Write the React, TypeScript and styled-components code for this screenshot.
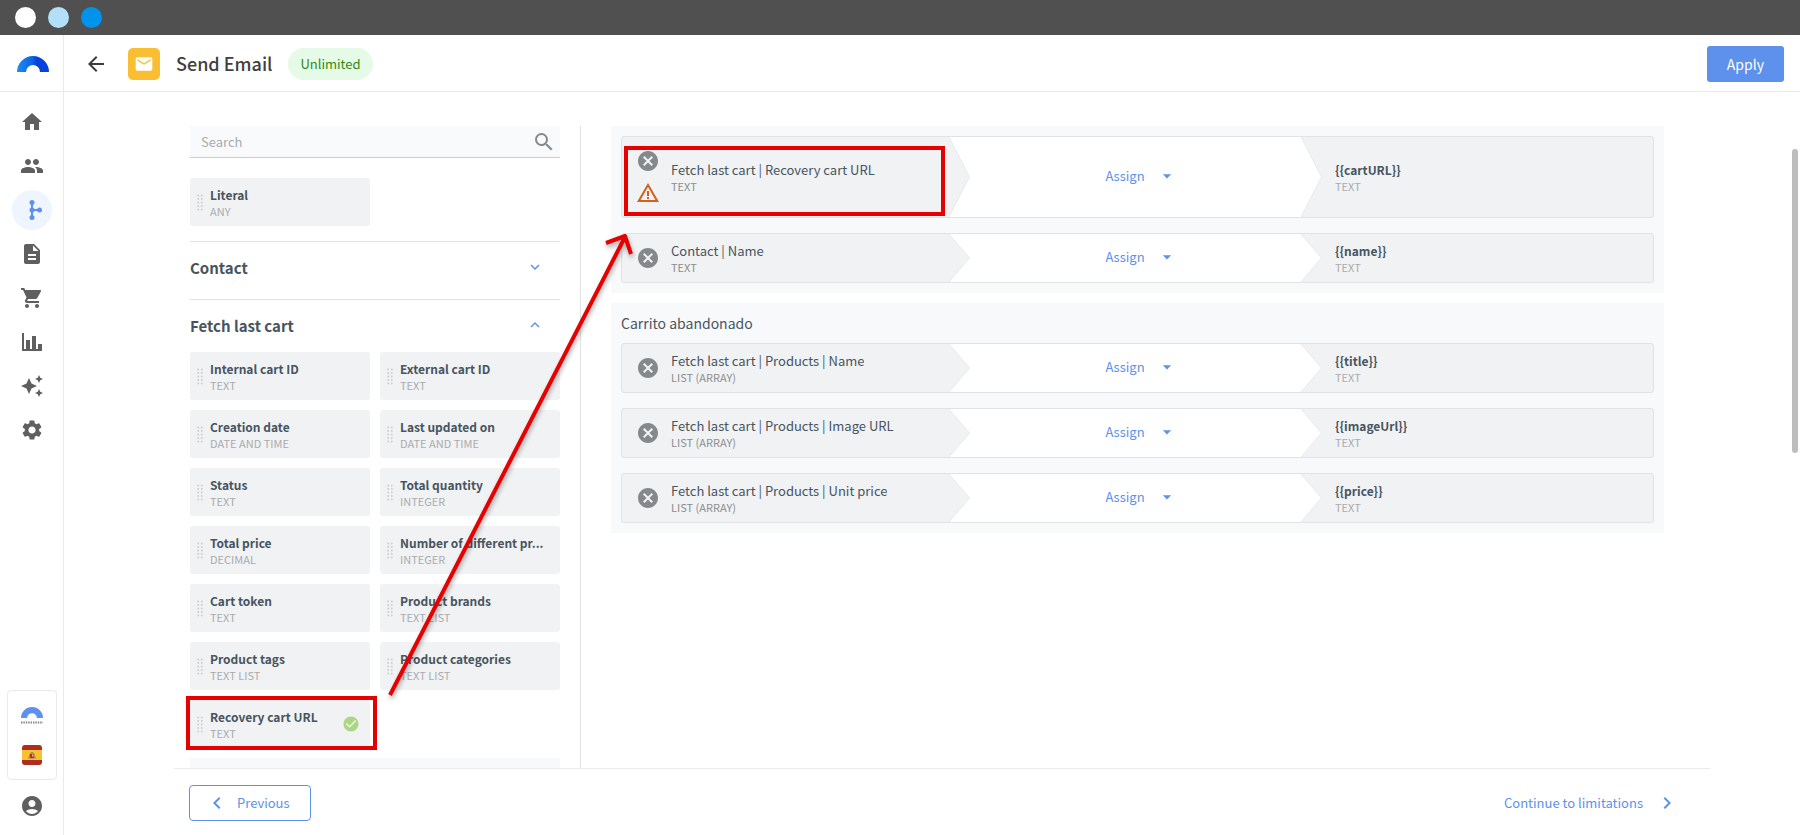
import React from "react";
import styled, { createGlobalStyle } from "styled-components";
import {
  MdHome,
  MdPeople,
  MdDescription,
  MdShoppingCart,
  MdAutoAwesome,
  MdSettings,
  MdAccountCircle,
  MdSearch,
  MdExpandMore,
  MdExpandLess,
  MdCancel,
  MdWarningAmber,
  MdCheckCircle,
  MdEmail,
  MdArrowBack,
  MdChevronLeft,
  MdChevronRight,
  MdArrowDropDown,
} from "react-icons/md";

const color = {
  blue: "#5d91ec",
  slate: "#475560",
  muted: "#a9abad",
  tile: "#f1f2f4",
  panel: "#f8f9fb",
  line: "#e0e2e4",
  red: "#e60000",
  icon: "#5f5f5f",
};

const GlobalStyle = createGlobalStyle`
  *, *::before, *::after { box-sizing: border-box; }
  body { margin: 0; background: #fff; color: ${color.slate}; }
  body, button, input { font-family: "Noto Sans CJK SC", "Noto Sans", sans-serif; }
  button { padding: 0; border: 0; background: none; color: inherit; cursor: pointer; }
  h1, h2, p { margin: 0; }
  svg { display: block; flex: none; }
`;

const Page = styled.div`
  display: flex;
  flex-direction: column;
  height: 100vh;
  overflow: hidden;
`;

const WindowBar = styled.div`
  display: flex;
  flex: none;
  align-items: center;
  gap: 12px;
  height: 35px;
  padding: 0 15px;
  background: #505050;
`;

const WindowDot = styled.span<{ $fill: string }>`
  width: 21px;
  height: 21px;
  border-radius: 50%;
  background: ${(p) => p.$fill};
`;

const Body = styled.div`
  display: flex;
  flex: 1;
  min-height: 0;
`;

const Sidebar = styled.nav`
  display: flex;
  flex: none;
  flex-direction: column;
  align-items: center;
  width: 64px;
  padding-bottom: 9px;
  border-right: 1px solid #e9eaeb;
`;

const LogoLink = styled.a`
  display: flex;
  align-items: center;
  justify-content: center;
  width: 100%;
  height: 57px;
  padding: 2px 0 0 2px;
  border-bottom: 1px solid #e9eaeb;
`;

const NavList = styled.div`
  display: flex;
  flex: 1;
  flex-direction: column;
  gap: 4px;
  padding-top: 10px;
`;

const NavLink = styled.a<{ $active?: boolean }>`
  display: flex;
  align-items: center;
  justify-content: center;
  width: 40px;
  height: 40px;
  border-radius: 50%;
  color: ${(p) => (p.$active ? color.blue : color.icon)};
  background: ${(p) => (p.$active ? "#eff5fe" : "transparent")};
`;

const AccountBox = styled.div`
  display: flex;
  flex-direction: column;
  align-items: center;
  gap: 20px;
  width: 50px;
  height: 90px;
  margin-bottom: 6px;
  padding-top: 16px;
  border: 1px solid #e9eaeb;
  border-radius: 4px;
`;

const Main = styled.main`
  display: flex;
  flex: 1;
  flex-direction: column;
  min-width: 0;
`;

const Header = styled.header`
  display: flex;
  flex: none;
  align-items: center;
  gap: 16px;
  height: 57px;
  padding: 2px 16px 0 20px;
  border-bottom: 1px solid #e9eaeb;
`;

const BackButton = styled.button`
  margin-right: 4px;
  color: #3c3c3c;
`;

const MailTile = styled.span`
  display: flex;
  align-items: center;
  justify-content: center;
  width: 32px;
  height: 32px;
  border-radius: 5px;
  color: #fff;
  background: #fabe32;
`;

const Title = styled.h1`
  font-size: 18px;
  font-weight: 500;
  line-height: 32px;
  padding-bottom: 2px;
  color: #404040;
`;

const Badge = styled.span`
  padding: 0 12px;
  border-radius: 16px;
  font-size: 13px;
  line-height: 32px;
  color: #2f8a10;
  background: #e5fbe8;
`;

const ApplyButton = styled.button`
  height: 36px;
  margin-left: auto;
  padding: 0 20px;
  border-radius: 3px;
  font-size: 14px;
  color: #fff;
  background: ${color.blue};
`;

const Workspace = styled.div`
  position: relative;
  display: flex;
  flex: 1;
  min-height: 0;
  margin-left: 110px;
  padding: 34px 136px 0 0;
`;

const Fields = styled.section`
  flex: none;
  width: 407px;
  padding: 0 20px 0 16px;
  overflow: hidden;
  border-right: 1px solid ${color.line};
`;

const SearchBox = styled.label`
  display: flex;
  align-items: center;
  height: 32px;
  margin-bottom: 20px;
  padding: 0 4px 0 11px;
  border-bottom: 1px solid #c9ced3;
  color: #85888a;
  background: #f9fafc;
`;

const SearchInput = styled.input`
  flex: 1;
  min-width: 0;
  padding: 0;
  border: 0;
  outline: 0;
  font-size: 13px;
  background: transparent;
  &::placeholder { color: ${color.muted}; opacity: 1; }
`;

const TileGrid = styled.div`
  display: grid;
  grid-template-columns: 1fr 1fr;
  gap: 10px;
`;

const Tile = styled.div`
  position: relative;
  display: flex;
  align-items: center;
  gap: 7px;
  min-width: 0;
  height: 48px;
  padding: 0 10px 0 7px;
  border-radius: 3px;
  background: ${color.tile};
`;

const TileText = styled.div`
  flex: 1;
  min-width: 0;
  padding-top: 1px;
`;

const Name = styled.p<{ $strong?: boolean }>`
  overflow: hidden;
  font-size: ${(p) => (p.$strong ? 12 : 13)}px;
  font-weight: ${(p) => (p.$strong ? 700 : 400)};
  line-height: 17px;
  text-overflow: ellipsis;
  white-space: nowrap;
`;

const Kind = styled.p<{ $dark?: boolean }>`
  font-size: 11px;
  line-height: 16px;
  color: ${(p) => (p.$dark ? "#8a8d90" : color.muted)};
`;

const SectionToggle = styled.button<{ $first?: boolean }>`
  display: flex;
  align-items: center;
  justify-content: space-between;
  width: 100%;
  height: ${(p) => (p.$first ? 58 : 53)}px;
  margin-top: ${(p) => (p.$first ? 15 : 0)}px;
  padding-right: 16px;
  padding-bottom: ${(p) => (p.$first ? 7 : 2)}px;
  border-top: 1px solid ${color.line};
  font-size: 15px;
  font-weight: 700;
  svg { color: ${color.blue}; }
`;

const NextGroup = styled.div`
  height: 48px;
  margin-top: 10px;
  background: ${color.panel};
`;

const Mappings = styled.section`
  display: flex;
  flex: 1;
  flex-direction: column;
  gap: 10px;
  min-width: 0;
  padding-left: 30px;
`;

const Panel = styled.div`
  display: flex;
  flex-direction: column;
  gap: 15px;
  padding: 10px;
  background: ${color.panel};
`;

const PanelTitle = styled.h2`
  margin-bottom: -15px;
  font-size: 14px;
  font-weight: 400;
  line-height: 20px;
  padding-bottom: 10px;
`;

const Row = styled.div<{ $tall?: boolean }>`
  position: relative;
  display: grid;
  grid-template-columns: 327fr 352fr 352fr;
  height: ${(p) => (p.$tall ? 82 : 50)}px;
  border: 1px solid ${color.line};
  border-radius: 3px;
  background: ${color.tile};
`;

const Source = styled.div`
  display: flex;
  align-items: center;
  gap: 11px;
  min-width: 0;
  padding-left: 14px;
`;

const SourceIcons = styled.div`
  display: flex;
  flex-direction: column;
  gap: 8px;
`;

const RemoveButton = styled.button`
  color: #85898b;
`;

const Action = styled.div`
  position: relative;
  display: flex;
  align-items: center;
  justify-content: center;
  padding-left: 32px;
  background: #fff;
`;

const Notch = styled.svg<{ $end?: boolean }>`
  position: absolute;
  top: 0;
  left: ${(p) => (p.$end ? "100%" : "0")};
  width: 21px;
  height: 100%;
`;

const AssignButton = styled.button`
  display: flex;
  align-items: center;
  gap: 12px;
  padding-bottom: 2px;
  font-size: 13px;
  line-height: 20px;
  color: ${color.blue};
`;

const Target = styled.div`
  display: flex;
  flex-direction: column;
  justify-content: center;
  padding-left: 34px;
`;

const Footer = styled.footer`
  display: flex;
  flex: none;
  align-items: center;
  justify-content: space-between;
  height: 67px;
  margin: 0 90px 0 110px;
  padding: 1px 31px 0 15px;
  border-top: 1px solid #e9eaeb;
  color: ${color.blue};
`;

const FooterButton = styled.button<{ $outlined?: boolean }>`
  display: flex;
  align-items: center;
  gap: ${(p) => (p.$outlined ? 8 : 12)}px;
  height: 36px;
  padding: ${(p) => (p.$outlined ? "0 20px 0 15px" : "0")};
  border: ${(p) => (p.$outlined ? `1px solid ${color.blue}` : "0")};
  border-radius: 4px;
  font-size: 13px;
`;

const ScrollThumb = styled.div`
  position: absolute;
  top: 57px;
  right: 2px;
  width: 6px;
  height: 304px;
  border-radius: 3px;
  background: #bdbdbd;
`;

const Highlight = styled.span<{ $row?: boolean }>`
  position: absolute;
  z-index: 1;
  top: ${(p) => (p.$row ? "9px" : "-4px")};
  left: ${(p) => (p.$row ? "2px" : "-4px")};
  width: ${(p) => (p.$row ? "321px" : "191px")};
  height: ${(p) => (p.$row ? "70px" : "54px")};
  border: 4px solid ${color.red};
  pointer-events: none;
`;

const ArrowLayer = styled.svg`
  position: absolute;
  top: 134px;
  left: 206px;
  filter: drop-shadow(1px 3px 2px rgba(0, 0, 0, 0.3));
  pointer-events: none;
`;

function BrandArc({ width, plain }: { width: number; plain?: boolean }) {
  return (
    <svg width={width} height={width / 2} viewBox="0 0 32 16" aria-hidden="true">
      <defs>
        <linearGradient id="arc" x1="0" x2="1">
          <stop offset="0" stopColor="#1f8df0" />
          <stop offset="0.5" stopColor="#0b5fe6" />
          <stop offset="0.6" stopColor="#0443da" />
          <stop offset="1" stopColor="#0443e0" />
        </linearGradient>
      </defs>
      <path
        d="M0 16A16 16 0 0 1 32 16H23A7 7 0 0 0 9 16Z"
        fill={plain ? color.blue : "url(#arc)"}
      />
    </svg>
  );
}

const BrandMark = styled.div`
  display: flex;
  flex-direction: column;
  align-items: center;
  gap: 3px;
  height: 18px;
`;

function WordmarkLine() {
  return (
    <svg width="22" height="3" viewBox="0 0 22 3" aria-hidden="true">
      <path d="M0 1.5H22" stroke="#7d838c" strokeWidth="2" strokeDasharray="1.4 1" />
    </svg>
  );
}

function FlowIcon() {
  return (
    <svg width="24" height="24" viewBox="0 0 24 24" fill="currentColor" aria-hidden="true">
      <path d="M12 4V20M12 12H20" stroke="currentColor" strokeWidth="2" />
      <circle cx="12" cy="4.5" r="2.5" />
      <circle cx="12" cy="12" r="2.5" />
      <circle cx="12" cy="19.5" r="2.5" />
      <circle cx="19.5" cy="12" r="2.5" />
    </svg>
  );
}

function ChartIcon() {
  return (
    <svg width="24" height="24" viewBox="0 0 24 24" fill="currentColor" aria-hidden="true">
      <path d="M22 21H2V3H4V19H6V10H10V19H12V6H16V19H18V14H22V21Z" />
    </svg>
  );
}

function SpainFlag() {
  return (
    <svg width="20" height="20" viewBox="0 0 20 20" aria-label="Español">
      <rect width="20" height="20" rx="3" fill="#ad2d22" />
      <rect y="5" width="20" height="10" fill="#f8c132" />
      <path d="M6 12H7V9.500H8V7.800L10 7L12 7.800V9.500H13V12H14V13.500H6Z" fill="#c08a3c" />
      <path d="M8 9h4v3.500l-2 1-2-1Z" fill="#a8322a" />
      <rect x="10" y="9.500" width="1.500" height="2" fill="#d9c7c9" />
    </svg>
  );
}

function DragDots() {
  const rows = [0, 1, 2, 3, 4];
  return (
    <svg width="6" height="17" viewBox="0 0 6 17" fill="#c9ccd0" aria-hidden="true">
      {rows.map((r) => (
        <React.Fragment key={r}>
          <circle cx="1.2" cy={1.5 + r * 3.5} r="0.9" />
          <circle cx="4.800" cy={1.5 + r * 3.5} r="0.9" />
        </React.Fragment>
      ))}
    </svg>
  );
}

function FieldTile({ name, kind, used }: { name: string; kind: string; used?: boolean }) {
  return (
    <Tile>
      <DragDots />
      <TileText>
        <Name $strong>{name}</Name>
        <Kind>{kind}</Kind>
      </TileText>
      {used && <MdCheckCircle size={18} color="#acd681" />}
      {used && <Highlight />}
    </Tile>
  );
}

interface Mapping {
  source: string;
  kind: string;
  target: string;
  warning?: boolean;
}

function MappingRow({ source, kind, target, warning }: Mapping) {
  return (
    <Row $tall={warning}>
      <Source>
        <SourceIcons>
          <RemoveButton type="button" aria-label={`Remove ${source}`}>
            <MdCancel size={24} />
          </RemoveButton>
          {warning && <MdWarningAmber size={24} color="#d1611f" />}
        </SourceIcons>
        <div>
          <Name>{source}</Name>
          <Kind $dark>{kind}</Kind>
        </div>
      </Source>
      <Action>
        <Notch viewBox="0 0 21 48" preserveAspectRatio="none" aria-hidden="true">
          <path d="M0 0L20.500 24L0 48Z" fill={color.tile} />
          <path d="M0 0L20.500 24L0 48" fill="none" stroke="#e8eaeb" vectorEffect="non-scaling-stroke" />
        </Notch>
        <AssignButton type="button">
          Assign
          <MdArrowDropDown size={20} />
        </AssignButton>
        <Notch $end viewBox="0 0 21 48" preserveAspectRatio="none" aria-hidden="true">
          <path d="M0 0L20.500 24L0 48Z" fill="#fff" />
          <path d="M0 0L20.500 24L0 48" fill="none" stroke="#e8eaeb" vectorEffect="non-scaling-stroke" />
        </Notch>
      </Action>
      <Target>
        <Name $strong>{target}</Name>
        <Kind>TEXT</Kind>
      </Target>
      {warning && <Highlight $row />}
    </Row>
  );
}

const navItems = [
  { label: "Home", icon: <MdHome size={24} /> },
  { label: "Contacts", icon: <MdPeople size={24} /> },
  { label: "Workflows", icon: <FlowIcon />, active: true },
  { label: "Content", icon: <MdDescription size={24} /> },
  { label: "Orders", icon: <MdShoppingCart size={24} /> },
  { label: "Analytics", icon: <ChartIcon /> },
  { label: "AI", icon: <MdAutoAwesome size={24} /> },
  { label: "Settings", icon: <MdSettings size={24} /> },
];

const cartFields = [
  ["Internal cart ID", "TEXT"],
  ["External cart ID", "TEXT"],
  ["Creation date", "DATE AND TIME"],
  ["Last updated on", "DATE AND TIME"],
  ["Status", "TEXT"],
  ["Total quantity", "INTEGER"],
  ["Total price", "DECIMAL"],
  ["Number of different pr...", "INTEGER"],
  ["Cart token", "TEXT"],
  ["Product brands", "TEXT LIST"],
  ["Product tags", "TEXT LIST"],
  ["Product categories", "TEXT LIST"],
  ["Recovery cart URL", "TEXT"],
];

const general: Mapping[] = [
  { source: "Fetch last cart | Recovery cart URL", kind: "TEXT", target: "{{cartURL}}", warning: true },
  { source: "Contact | Name", kind: "TEXT", target: "{{name}}" },
];

const products: Mapping[] = [
  { source: "Fetch last cart | Products | Name", kind: "LIST (ARRAY)", target: "{{title}}" },
  { source: "Fetch last cart | Products | Image URL", kind: "LIST (ARRAY)", target: "{{imageUrl}}" },
  { source: "Fetch last cart | Products | Unit price", kind: "LIST (ARRAY)", target: "{{price}}" },
];

export default function App() {
  return (
    <Page>
      <GlobalStyle />
      <WindowBar>
        <WindowDot $fill="#ffffff" />
        <WindowDot $fill="#b3dff9" />
        <WindowDot $fill="#0093ec" />
      </WindowBar>
      <Body>
        <Sidebar>
          <LogoLink href="#" aria-label="Dashboard">
            <BrandArc width={32} />
          </LogoLink>
          <NavList>
            {navItems.map((item) => (
              <NavLink key={item.label} href="#" aria-label={item.label} $active={item.active}>
                {item.icon}
              </NavLink>
            ))}
          </NavList>
          <AccountBox>
            <BrandMark>
              <BrandArc width={22} plain />
              <WordmarkLine />
            </BrandMark>
            <SpainFlag />
          </AccountBox>
          <NavLink href="#" aria-label="Account">
            <MdAccountCircle size={24} />
          </NavLink>
        </Sidebar>
        <Main>
          <Header>
            <BackButton type="button" aria-label="Back">
              <MdArrowBack size={24} />
            </BackButton>
            <MailTile>
              <MdEmail size={20} />
            </MailTile>
            <Title>Send Email</Title>
            <Badge>Unlimited</Badge>
            <ApplyButton type="button">Apply</ApplyButton>
          </Header>
          <Workspace>
            <Fields>
              <SearchBox>
                <SearchInput type="text" placeholder="Search" aria-label="Search" />
                <MdSearch size={24} />
              </SearchBox>
              <TileGrid>
                <FieldTile name="Literal" kind="ANY" />
              </TileGrid>
              <SectionToggle type="button" $first aria-expanded={false}>
                Contact
                <MdExpandMore size={18} />
              </SectionToggle>
              <SectionToggle type="button" aria-expanded={true}>
                Fetch last cart
                <MdExpandLess size={18} />
              </SectionToggle>
              <TileGrid>
                {cartFields.map(([name, kind]) => (
                  <FieldTile key={name} name={name} kind={kind} used={name === "Recovery cart URL"} />
                ))}
              </TileGrid>
              <NextGroup />
            </Fields>
            <Mappings>
              <Panel>
                {general.map((m) => (
                  <MappingRow key={m.target} {...m} />
                ))}
              </Panel>
              <Panel>
                <PanelTitle>Carrito abandonado</PanelTitle>
                {products.map((m) => (
                  <MappingRow key={m.target} {...m} />
                ))}
              </Panel>
            </Mappings>
            <ScrollThumb />
            <ArrowLayer width="260" height="480" viewBox="380 226 260 480" fill="none" aria-hidden="true">
              <path
                d="M390 695L625 237M606 243L625 236L631 254"
                stroke={color.red}
                strokeWidth="4"
                strokeLinejoin="round"
              />
            </ArrowLayer>
          </Workspace>
          <Footer>
            <FooterButton type="button" $outlined>
              <MdChevronLeft size={24} />
              Previous
            </FooterButton>
            <FooterButton type="button">
              Continue to limitations
              <MdChevronRight size={24} />
            </FooterButton>
          </Footer>
        </Main>
      </Body>
    </Page>
  );
}
